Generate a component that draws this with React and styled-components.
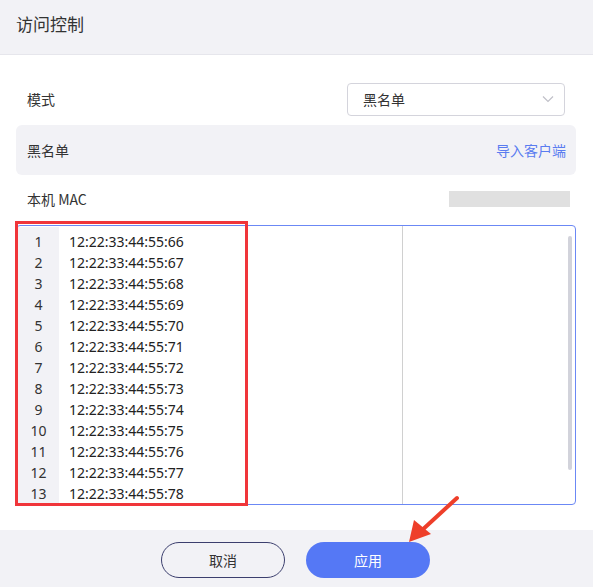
import React from "react";
import styled, { createGlobalStyle } from "styled-components";

const Global = createGlobalStyle`
  html, body { margin: 0; padding: 0; background: #fff; }
  body { font-family: "Noto Sans", "Noto Sans CJK SC", sans-serif; color: #333; }
  * { box-sizing: border-box; }
`;

const Dialog = styled.div`
  position: relative;
  width: 593px;
  height: 587px;
  display: flex;
  flex-direction: column;
  background: #fff;
  overflow: hidden;
`;

const Header = styled.div`
  height: 55px;
  flex: none;
  background: #f2f2f6;
  border-bottom: 1px solid #e6e6ec;
  display: flex;
  align-items: center;
  padding: 0 16px 7px;
  font-size: 17px;
  color: #333;
  font-family: "Noto Sans CJK SC", sans-serif;
`;

const Body = styled.div`
  flex: 1;
  padding: 27px 17px 0 16px;
  display: flex;
  flex-direction: column;
`;

const Row = styled.div`
  display: flex;
  align-items: center;
  justify-content: space-between;
  height: ${(p) => p.$h || 34}px;
  padding: 0 ${(p) => p.$pr || 0}px 0 11px;
  margin-bottom: ${(p) => p.$mb || 0}px;
  background: ${(p) => (p.$panel ? "#f2f2f6" : "transparent")};
  border-radius: ${(p) => (p.$panel ? 6 : 0)}px;
  font-size: 14px;
  font-family: "Noto Sans CJK SC", sans-serif;
  color: #333;
`;

const Select = styled.div`
  width: 218px;
  height: 33px;
  border: 1px solid #d4d4dc;
  border-radius: 4px;
  display: flex;
  align-items: center;
  justify-content: space-between;
  padding: 0 10px 0 15px;
  font-size: 14px;
  color: #333;
`;

const LinkText = styled.span`
  color: #5a7cf0;
  font-size: 14px;
`;

const MaskBar = styled.div`
  width: 121px;
  height: 16px;
  background: #e0e0e0;
`;

const Editor = styled.div`
  height: 280px;
  border: 1px solid #6b88f5;
  border-radius: 4px;
  display: flex;
  position: relative;
`;

const Gutter = styled.div`
  width: 41px;
  margin: 1px 0 1px 1px;
  background: #f2f2f6;
  padding-top: 4px;
  display: flex;
  flex-direction: column;
`;

const LineNo = styled.div`
  height: 21px;
  line-height: 21px;
  text-align: center;
  font-size: 14px;
  color: #333;
`;

const Code = styled.div`
  width: 344px;
  padding: 5px 0 0 10px;
  border-right: 1px solid #d0d0d0;
  display: flex;
  flex-direction: column;
`;

const CodeLine = styled.div`
  height: 21px;
  line-height: 21px;
  font-size: 14px;
  color: #222;
`;

const Scroll = styled.div`
  flex: 1;
  position: relative;
`;

const Thumb = styled.div`
  position: absolute;
  right: 3px;
  top: 10px;
  width: 4px;
  height: 234px;
  border-radius: 2px;
  background: #d2d3db;
`;

const Footer = styled.div`
  height: 57px;
  flex: none;
  background: #f2f2f6;
  display: flex;
  justify-content: center;
  align-items: flex-start;
  padding-top: 12px;
  padding-right: 2px;
  gap: 21px;
`;

const Button = styled.button`
  width: 124px;
  height: 36px;
  border-radius: 18px;
  font-size: 14px;
  font-family: "Noto Sans CJK SC", sans-serif;
  cursor: pointer;
  border: ${(p) => (p.$primary ? "none" : "1.5px solid #3c3f6e")};
  background: ${(p) => (p.$primary ? "#5578f5" : "transparent")};
  color: ${(p) => (p.$primary ? "#fff" : "#333")};
`;

const Highlight = styled.div`
  position: absolute;
  left: 15px;
  top: 221px;
  width: 233px;
  height: 285px;
  border: 3px solid #f0353a;
  pointer-events: none;
`;

const Arrow = styled.svg`
  position: absolute;
  left: 400px;
  top: 490px;
  pointer-events: none;
`;

const macs = Array.from({ length: 13 }, (_, i) => `12:22:33:44:55:${66 + i}`);

export default function App() {
  return (
    <>
      <Global />
      <Dialog>
        <Header>访问控制</Header>
        <Body>
          <Row $h={34} $mb={9} $pr={11}>
            <span>模式</span>
            <Select>
              <span>黑名单</span>
              <svg width="12" height="8" viewBox="0 0 12 8">
                <path d="M1 1.5 L6 6.5 L11 1.5" fill="none" stroke="#c0c0c8" strokeWidth="1.2" />
              </svg>
            </Select>
          </Row>
          <Row $panel $h={50} $mb={15} $pr={10}>
            <span>黑名单</span>
            <LinkText>导入客户端</LinkText>
          </Row>
          <Row $h={18} $mb={17} $pr={6}>
            <span>本机 MAC</span>
            <MaskBar />
          </Row>
          <Editor>
            <Gutter>
              {macs.map((_, i) => (
                <LineNo key={i}>{i + 1}</LineNo>
              ))}
            </Gutter>
            <Code>
              {macs.map((m) => (
                <CodeLine key={m}>{m}</CodeLine>
              ))}
            </Code>
            <Scroll>
              <Thumb />
            </Scroll>
          </Editor>
        </Body>
        <Footer>
          <Button>取消</Button>
          <Button $primary>应用</Button>
        </Footer>
        <Highlight />
        <Arrow width="70" height="60" viewBox="0 0 70 60">
          <line x1="57" y1="8" x2="20" y2="42" stroke="#ee3f2a" strokeWidth="4" strokeLinecap="round" />
          <path d="M9 52 L14 30 L31 44 Z" fill="#ee3f2a" />
        </Arrow>
      </Dialog>
    </>
  );
}
